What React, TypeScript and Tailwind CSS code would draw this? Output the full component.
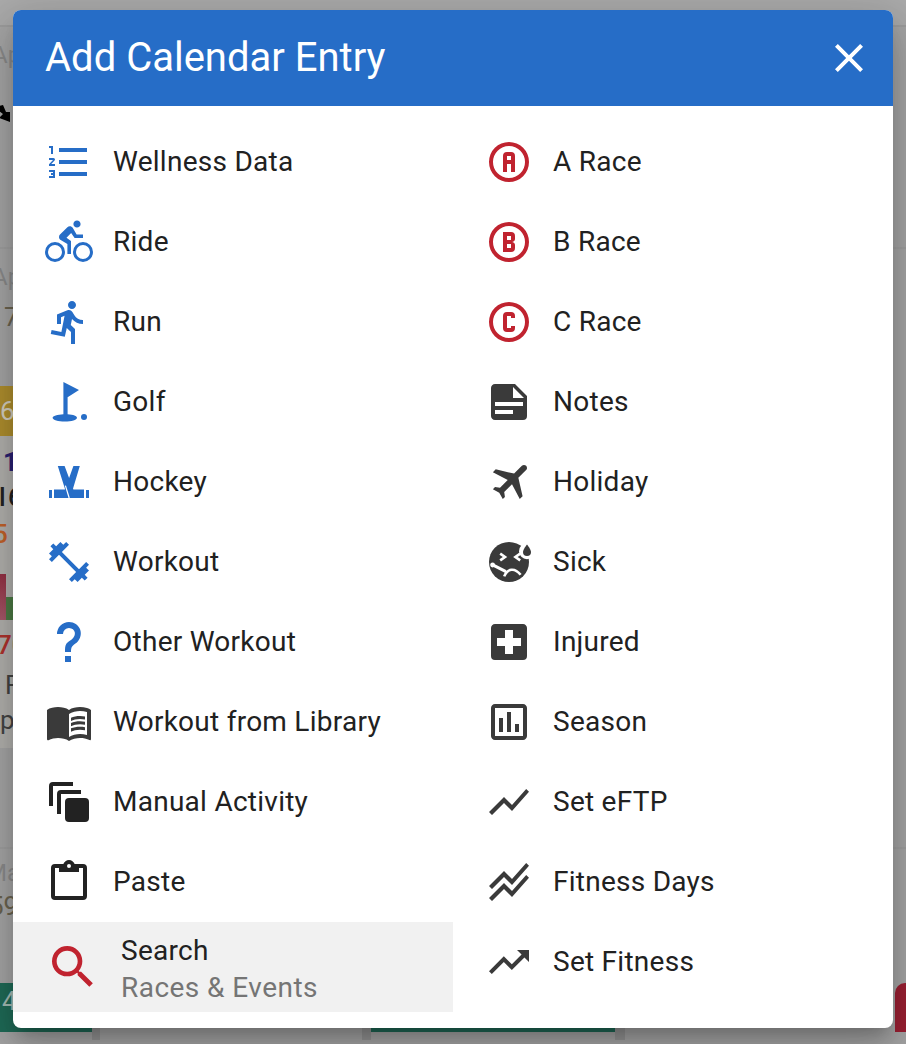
import React from "react";

const C = "M12,2A10,10 0 0,1 22,12A10,10 0 0,1 12,22A10,10 0 0,1 2,12A10,10 0 0,1 12,2M12,4A8,8 0 0,0 4,12A8,8 0 0,0 12,20A8,8 0 0,0 20,12A8,8 0 0,0 12,4Z";
const LINE = "M3.5,18.5L9.5,12.5L13.5,16.5L22,6.92L20.59,5.5L13.5,13.5L9.5,9.5L2,17L3.5,18.5Z";

function Ico({ children, cls = "w-12 h-12" }: { children: React.ReactNode; cls?: string }) {
  return (
    <svg viewBox="0 0 24 24" fill="currentColor" className={`${cls} shrink-0`}>
      {children}
    </svg>
  );
}

const P = (d: string) => <path d={d} />;

const left: { label: string; color: string; icon: React.ReactNode }[] = [
  { label: "Wellness Data", color: "text-[#266dc7]", icon: P("M7,13V11H21V13H7M7,19V17H21V19H7M7,7V5H21V7H7M3,8V5H2V4H4V8H3M2,17V16H5V20H2V19H4V18.5H3V17.5H4V17H2M4.25,10A0.75,0.75 0 0,1 5,10.75C5,10.95 4.92,11.14 4.79,11.27L3.12,13H5V14H2V13.08L4,11H2V10H4.25Z") },
  { label: "Ride", color: "text-[#266dc7]", icon: P("M5,20.5A3.5,3.5 0 0,1 1.5,17A3.5,3.5 0 0,1 5,13.5A3.5,3.5 0 0,1 8.5,17A3.5,3.5 0 0,1 5,20.5M5,12A5,5 0 0,0 0,17A5,5 0 0,0 5,22A5,5 0 0,0 10,17A5,5 0 0,0 5,12M14.8,10H19V8.2H15.8L13.86,4.93C13.57,4.43 13,4.1 12.4,4.1C11.93,4.1 11.5,4.29 11.2,4.6L7.5,8.29C7.19,8.6 7,9 7,9.5C7,10.13 7.33,10.66 7.85,10.97L11.2,13V18H13V11.5L10.75,9.85L13.07,7.5M19,20.5A3.5,3.5 0 0,1 15.5,17A3.5,3.5 0 0,1 19,13.5A3.5,3.5 0 0,1 22.5,17A3.5,3.5 0 0,1 19,20.5M19,12A5,5 0 0,0 14,17A5,5 0 0,0 19,22A5,5 0 0,0 24,17A5,5 0 0,0 19,12M16,4.8C17,4.8 17.8,4 17.8,3C17.8,2 17,1.2 16,1.2C15,1.2 14.2,2 14.2,3C14.2,4 15,4.8 16,4.8Z") },
  { label: "Run", color: "text-[#266dc7]", icon: P("M13.5,5.5C14.59,5.5 15.5,4.58 15.5,3.5C15.5,2.38 14.59,1.5 13.5,1.5C12.39,1.5 11.5,2.38 11.5,3.5C11.5,4.58 12.39,5.5 13.5,5.5M9.89,19.38L10.89,15L13,17V23H15V15.5L12.89,13.5L13.5,10.5C14.79,12 16.79,13 19,13V11C17.09,11 15.5,10 14.69,8.58L13.69,7C13.29,6.38 12.69,6 12,6C11.69,6 11.5,6.08 11.19,6.08L6,8.28V13H8V9.58L9.79,8.88L8.19,17L3.29,16L2.89,18L9.89,19.38Z") },
  { label: "Golf", color: "text-[#266dc7]", icon: (<>
    <path d="M9.2,2L17,6L11.3,9.6V18.1C14.2,18.3 16,19 16,19.9C16,21 13.3,21.8 9.9,21.8C6.6,21.8 3.8,21 3.8,19.9C3.8,19 6.2,18.3 9.2,18.1Z" />
    <circle cx="19.5" cy="19.5" r="1.5" />
  </>) },
  { label: "Hockey", color: "text-[#266dc7]", icon: (<>
    <path d="M17.4,4H14.2L10,15.8H4.5V20H12.6Z" />
    <path d="M6.4,4H9.8L14.2,15.8H19.5V20H11.4Z" />
    <path d="M10.2,13.8L12.1,20" stroke="#fff" strokeWidth="0.6" fill="none" />
    <rect x="2" y="16" width="1.5" height="4" />
    <rect x="20.5" y="16" width="1.5" height="4" />
  </>) },
  { label: "Workout", color: "text-[#266dc7]", icon: P("M20.57,14.86L22,13.43L20.57,12L17,15.57L8.43,7L12,3.43L10.57,2L9.14,3.43L7.71,2L5.57,4.14L4.14,2.71L2.71,4.14L4.14,5.57L2,7.71L3.43,9.14L2,10.57L3.43,12L7,8.43L15.57,17L12,20.57L13.43,22L14.86,20.57L16.29,22L18.43,19.86L19.86,21.29L21.29,19.86L19.86,18.43L22,16.29L20.57,14.86Z") },
  { label: "Other Workout", color: "text-[#266dc7]", icon: P("M10,19H13V22H10V19M12,2C17.35,2.22 19.68,7.62 16.5,11.67C15.67,12.67 14.33,13.33 13.67,14.17C13,15 13,16 13,17H10C10,15.33 10,13.92 10.67,12.92C11.33,11.92 12.67,11.33 13.5,10.67C15.92,8.43 15.32,5.26 12,5A3,3 0 0,0 9,8H6A6,6 0 0,1 12,2Z") },
  { label: "Workout from Library", color: "text-[#3a3a3a]", icon: P("M21,5C19.89,4.65 18.67,4.5 17.5,4.5C15.55,4.5 13.45,4.9 12,6C10.55,4.9 8.45,4.5 6.5,4.5C4.55,4.5 2.45,4.9 1,6V20.65C1,20.9 1.25,21.15 1.5,21.15C1.6,21.15 1.65,21.1 1.75,21.1C3.1,20.45 5.05,20 6.5,20C8.45,20 10.55,20.4 12,21.5C13.35,20.65 15.8,20 17.5,20C19.15,20 20.85,20.3 22.25,21.05C22.35,21.1 22.4,21.1 22.5,21.1C22.75,21.1 23,20.85 23,20.6V6C22.4,5.55 21.75,5.25 21,5M21,18.5C19.9,18.15 18.7,18 17.5,18C15.8,18 13.35,18.65 12,19.5V8C13.35,7.15 15.8,6.5 17.5,6.5C18.7,6.5 19.9,6.65 21,7V18.5ZM17.5,10.5C18.38,10.5 19.23,10.59 20,10.76V9.24C19.21,9.09 18.36,9 17.5,9C15.8,9 14.26,9.29 13,9.83V11.49C14.13,10.85 15.7,10.5 17.5,10.5M13,12.49V14.15C14.13,13.51 15.7,13.16 17.5,13.16C18.38,13.16 19.23,13.25 20,13.42V11.9C19.21,11.75 18.36,11.66 17.5,11.66C15.8,11.66 14.26,11.96 13,12.49M17.5,14.33C15.8,14.33 14.26,14.62 13,15.16V16.82C14.13,16.18 15.7,15.83 17.5,15.83C18.38,15.83 19.23,15.92 20,16.09V14.57C19.21,14.41 18.36,14.33 17.5,14.33Z") },
  { label: "Manual Activity", color: "text-[#222222]", icon: (<>
    <path d="M2,14V4A2,2 0 0,1 4,2H14V4H4V14Z" />
    <path d="M6,18V8A2,2 0 0,1 8,6H18V8H8V18Z" />
    <rect x="10" y="10" width="12" height="12" rx="2" />
  </>) },
  { label: "Paste", color: "text-[#222222]", icon: P("M19,3H14.82C14.4,1.84 13.3,1 12,1C10.7,1 9.6,1.84 9.18,3H5A2,2 0 0,0 3,5V19A2,2 0 0,0 5,21H19A2,2 0 0,0 21,19V5A2,2 0 0,0 19,3M12,3A1,1 0 0,1 13,4A1,1 0 0,1 12,5A1,1 0 0,1 11,4A1,1 0 0,1 12,3M7,7H17V5H19V19H5V5H7V7Z") },
];

const right: { label: string; color: string; icon: React.ReactNode }[] = [
  { label: "A Race", color: "text-[#c0232f]", icon: P("M11,7A2,2 0 0,0 9,9V17H11V13H13V17H15V9A2,2 0 0,0 13,7H11M11,9H13V11H11V9" + C) },
  { label: "B Race", color: "text-[#c0232f]", icon: P("M15,10.5C15,11.3 14.3,12 13.5,12C14.3,12 15,12.7 15,13.5V15A2,2 0 0,1 13,17H9V7H13A2,2 0 0,1 15,9V10.5M13,15V13H11V15H13M13,11V9H11V11H13" + C) },
  { label: "C Race", color: "text-[#c0232f]", icon: P("M11,7H13A2,2 0 0,1 15,9V10H13V9H11V15H13V14H15V15A2,2 0 0,1 13,17H11A2,2 0 0,1 9,15V9A2,2 0 0,1 11,7" + C) },
  { label: "Notes", color: "text-[#3a3a3a]", icon: P("M14,10H19.5L14,4.5V10M5,3H15L21,9V19A2,2 0 0,1 19,21H5C3.89,21 3,20.1 3,19V5C3,3.89 3.89,3 5,3M5,12V14H19V12H5M5,16V18H14V16H5Z") },
  { label: "Holiday", color: "text-[#3a3a3a]", icon: P("M20.56 3.91C21.15 4.5 21.15 5.45 20.56 6.03L16.67 9.92L18.79 19.11L17.38 20.53L13.5 13.1L9.6 17L9.96 19.47L8.89 20.53L7.13 17.35L3.94 15.58L5 14.5L7.5 14.87L11.37 11L3.94 7.09L5.36 5.68L14.55 7.8L18.44 3.91C19 3.33 20 3.33 20.56 3.91Z") },
  { label: "Sick", color: "text-[#3a3a3a]", icon: (<>
    <circle cx="12" cy="12" r="10" />
    <circle cx="21" cy="6.6" r="4" fill="#fff" />
    <path d="M21,3.2C21,3.2 23,5.6 23,7A2,2 0 0,1 19,7C19,5.6 21,3.2 21,3.2Z" />
    <path d="M7.6,7.8L10,9.5L7.6,11.2M17.6,7.8L15.2,9.5L17.6,11.2" stroke="#fff" strokeWidth="1.3" fill="none" />
    <path d="M3.6,13.3L10,16.6" stroke="#fff" strokeWidth="1.5" fill="none" strokeLinecap="round" />
    <circle cx="3.8" cy="13.5" r="1.2" fill="#fff" />
    <path d="M9.6,19.2C11.2,15 15,14.8 17.8,18.4" stroke="#fff" strokeWidth="1.3" fill="none" />
  </>) },
  { label: "Injured", color: "text-[#3a3a3a]", icon: P("M19,3H5C3.89,3 3,3.89 3,5V19A2,2 0 0,0 5,21H19A2,2 0 0,0 21,19V5C21,3.89 20.1,3 19,3M18,14H14V18H10V14H6V10H10V6H14V10H18V14Z") },
  { label: "Season", color: "text-[#3a3a3a]", icon: P("M9 17H7V10H9V17M13 17H11V7H13V17M17 17H15V13H17V17M19 19H5V5H19V19.1M19 3H5C3.9 3 3 3.9 3 5V19C3 20.1 3.9 21 5 21H19C20.1 21 21 20.1 21 19V5C21 3.9 20.1 3 19 3Z") },
  { label: "Set eFTP", color: "text-[#3a3a3a]", icon: P(LINE) },
  { label: "Fitness Days", color: "text-[#3a3a3a]", icon: (<>
    <path d={LINE} transform="translate(0,-3)" />
    <path d={LINE} transform="translate(0,3)" />
  </>) },
  { label: "Set Fitness", color: "text-[#3a3a3a]", icon: P("M16,6L18.29,8.29L13.41,13.17L9.41,9.17L2,16.59L3.41,18L9.41,12L13.41,16L19.71,9.71L22,12V6H16Z") },
];

function Row({ label, color, icon }: { label: string; color: string; icon: React.ReactNode }) {
  return (
    <div className="flex h-20 items-center pl-8">
      <span className={color}>
        <Ico>{icon}</Ico>
      </span>
      <span className="ml-5 text-[28px] leading-[32px] tracking-[0.26px] text-[#212121]">{label}</span>
    </div>
  );
}

function Backdrop() {
  return (
    <div className="flex h-[1044px] w-[906px] flex-col bg-[#a6a6a6] font-['Roboto',sans-serif]">
      <div className="h-[27px] border-b-2 border-[#9d9d9d] bg-[#aaaaaa]" />
      <div className="h-[222px] overflow-hidden border-b-2 border-[#a0a0a0]">
        <div className="-ml-[8px] whitespace-nowrap pt-[13px] text-[24px] leading-[30px] text-[#8b8b8b]">Ap</div>
        <svg viewBox="0 0 13 20" className="mt-[33px] h-5 w-[13px]">
          <path d="M-1,3L3,2L6,9L10,9V19L-1,15L3,11L-1,8Z" fill="#000" />
        </svg>
      </div>
      <div className="h-[600px] overflow-hidden border-b-2 border-[#a0a0a0]">
        <div className="-ml-[8px] whitespace-nowrap pt-[13px] text-[24px] leading-[30px] text-[#8b8b8b]">Ap</div>
        <div className="pl-1 pt-[10px] text-[26px] leading-[30px] text-[#6b6450]">7</div>
        <div className="mt-[54px] h-[362px] w-[13px] overflow-hidden whitespace-nowrap bg-[#b3b2ae]">
          <div className="h-[50px] bg-[#b08f2e] text-[26px] leading-[50px] text-[#d5d0c0]">6</div>
          <div className="pl-[3px] pt-[11px] text-[26px] font-bold leading-[30px] text-[#2a2172]">1</div>
          <div className="-ml-[1px] pt-[5px] text-[26px] font-medium leading-[30px] tracking-[-2px] text-[#222222]">l 6</div>
          <div className="-ml-[7px] pt-[7px] text-[26px] font-medium leading-[30px] text-[#c2622a]">5</div>
          <div className="mt-[25px] flex h-[46px] items-end">
            <div className="h-[46px] w-[6px] bg-gradient-to-b from-[#943044] to-[#a8596b]" />
            <div className="h-[23px] w-[7px] bg-[#4d7c45]" />
          </div>
          <div className="-ml-[3px] pt-[10px] text-[26px] font-medium leading-[30px] text-[#b0332e]">70</div>
          <div className="pl-[5px] pt-[10px] text-[26px] leading-[30px] text-[#444444]">F</div>
          <div className="pt-[5px] text-[26px] leading-[30px] text-[#444444]">p</div>
        </div>
      </div>
      <div className="h-[134px] overflow-hidden whitespace-nowrap">
        <div className="-ml-[14px] pt-[9px] text-[24px] leading-[30px] text-[#8b8b8b]">Ma</div>
        <div className="-ml-[11px] pt-[3px] text-[26px] leading-[30px] text-[#6b6450]">59</div>
      </div>
      <div className="flex h-[57px] items-start">
        <div className="h-[49px] w-[92px] bg-[#1f6b57] pl-[2px] text-[26px] leading-[36px] text-[#a5bdb5]">4</div>
        <div className="h-[57px] w-[8px] bg-[#969696]" />
        <div className="h-[57px] w-[262px]" />
        <div className="h-[57px] w-[9px] bg-[#969696]" />
        <div className="h-[49px] w-[244px] bg-[#1f6b57]" />
        <div className="h-[57px] w-[10px] bg-[#969696]" />
        <div className="h-[57px] w-[270px]" />
        <div className="h-[49px] w-[11px] rounded-tl-[10px] bg-[#9c2033]" />
      </div>
    </div>
  );
}

export default function App() {
  return (
    <div className="relative h-[1044px] w-[906px] overflow-hidden font-['Roboto',sans-serif]">
      <Backdrop />
      <div className="absolute left-[13px] top-[10px] w-[880px] overflow-hidden rounded-lg bg-white shadow-[0_11px_15px_-7px_rgba(0,0,0,0.2),0_24px_38px_3px_rgba(0,0,0,0.14),0_9px_46px_8px_rgba(0,0,0,0.12)]">
        <div className="flex h-24 items-center justify-between bg-[#266dc7] pl-8 pr-5">
          <span className="text-[40px] leading-[48px] text-white">Add Calendar Entry</span>
          <svg viewBox="0 0 24 24" fill="#fff" className="h-12 w-12">
            <path d="M19,6.41L17.59,5L12,10.59L6.41,5L5,6.41L10.59,12L5,17.59L6.41,19L12,13.41L17.59,19L19,17.59L13.41,12L19,6.41Z" />
          </svg>
        </div>
        <div className="grid grid-cols-2 py-4">
          <div className="flex flex-col">
            {left.map((r) => (
              <Row key={r.label} {...r} />
            ))}
            <div className="flex h-[90px] items-center bg-[#f1f1f1] pl-8">
              <span className="text-[#c0232f]">
                <Ico cls="h-14 w-14">{P("M9.5,3A6.5,6.5 0 0,1 16,9.5C16,11.11 15.41,12.59 14.44,13.73L14.71,14H15.5L20.5,19L19,20.5L14,15.5V14.71L13.73,14.44C12.59,15.41 11.11,16 9.5,16A6.5,6.5 0 0,1 3,9.5A6.5,6.5 0 0,1 9.5,3M9.5,5C7,5 5,7 5,9.5C5,12 7,14 9.5,14C12,14 14,12 14,9.5C14,7 12,5 9.5,5Z")}</Ico>
              </span>
              <div className="ml-5 mt-[6px] flex flex-col">
                <span className="text-[28px] leading-[36px] tracking-[0.26px] text-[#212121]">Search</span>
                <span className="text-[28px] leading-[38px] tracking-[0.45px] text-[#757575]">Races &amp; Events</span>
              </div>
            </div>
          </div>
          <div className="flex flex-col">
            {right.map((r) => (
              <Row key={r.label} {...r} />
            ))}
          </div>
        </div>
      </div>
    </div>
  );
}
